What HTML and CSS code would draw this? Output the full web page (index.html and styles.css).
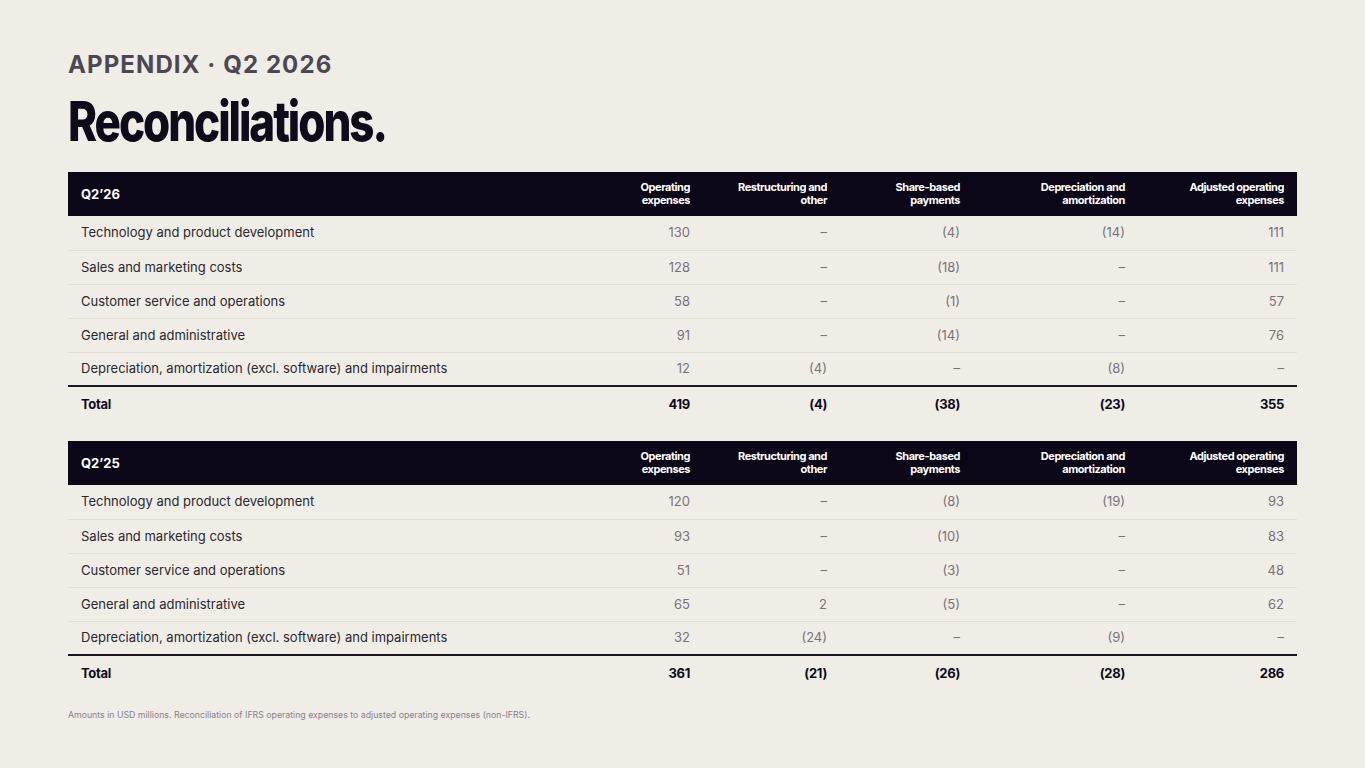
FILE: index.html
```html
<!DOCTYPE html>
<html lang="en">
<head>
<meta charset="utf-8">
<title>Reconciliations</title>
<link rel="stylesheet" href="styles.css">
</head>
<body>
<main class="page">
  <div class="eyebrow">APPENDIX · Q2 2026</div>
  <h1 class="title"><span class="title-text">Reconciliations.</span></h1>

  <table class="recon">
    <colgroup><col class="c-label"><col class="c-op"><col class="c-rs"><col class="c-sb"><col class="c-da"><col class="c-adj"></colgroup>
    <thead>
      <tr><th class="period">Q2’26</th><th>Operating<br>expenses</th><th>Restructuring and<br>other</th><th>Share-based<br>payments</th><th>Depreciation and<br>amortization</th><th>Adjusted operating<br>expenses</th></tr>
    </thead>
    <tbody>
      <tr><td>Technology and product development</td><td>130</td><td>–</td><td>(4)</td><td>(14)</td><td>111</td></tr>
      <tr><td>Sales and marketing costs</td><td>128</td><td>–</td><td>(18)</td><td>–</td><td>111</td></tr>
      <tr><td>Customer service and operations</td><td>58</td><td>–</td><td>(1)</td><td>–</td><td>57</td></tr>
      <tr><td>General and administrative</td><td>91</td><td>–</td><td>(14)</td><td>–</td><td>76</td></tr>
      <tr class="last"><td>Depreciation, amortization (excl. software) and impairments</td><td>12</td><td>(4)</td><td>–</td><td>(8)</td><td>–</td></tr>
    </tbody>
    <tfoot>
      <tr><td>Total</td><td>419</td><td>(4)</td><td>(38)</td><td>(23)</td><td>355</td></tr>
    </tfoot>
  </table>

  <table class="recon">
    <colgroup><col class="c-label"><col class="c-op"><col class="c-rs"><col class="c-sb"><col class="c-da"><col class="c-adj"></colgroup>
    <thead>
      <tr><th class="period">Q2’25</th><th>Operating<br>expenses</th><th>Restructuring and<br>other</th><th>Share-based<br>payments</th><th>Depreciation and<br>amortization</th><th>Adjusted operating<br>expenses</th></tr>
    </thead>
    <tbody>
      <tr><td>Technology and product development</td><td>120</td><td>–</td><td>(8)</td><td>(19)</td><td>93</td></tr>
      <tr><td>Sales and marketing costs</td><td>93</td><td>–</td><td>(10)</td><td>–</td><td>83</td></tr>
      <tr><td>Customer service and operations</td><td>51</td><td>–</td><td>(3)</td><td>–</td><td>48</td></tr>
      <tr><td>General and administrative</td><td>65</td><td>2</td><td>(5)</td><td>–</td><td>62</td></tr>
      <tr class="last"><td>Depreciation, amortization (excl. software) and impairments</td><td>32</td><td>(24)</td><td>–</td><td>(9)</td><td>–</td></tr>
    </tbody>
    <tfoot>
      <tr><td>Total</td><td>361</td><td>(21)</td><td>(26)</td><td>(28)</td><td>286</td></tr>
    </tfoot>
  </table>

  <p class="note">Amounts in USD millions. Reconciliation of IFRS operating expenses to adjusted operating expenses (non-IFRS).</p>
</main>
</body>
</html>
```
FILE: styles.css
```css
html, body {
  margin: 0;
  padding: 0;
  background: #f0ede7;
}
body {
  font-family: Inter, "Noto Sans", "Liberation Sans", sans-serif;
  color: #2a2731;
}
.page {
  width: 1229px;
  padding: 50px 68px 0 68px;
}
.eyebrow {
  font-family: Inter, "Liberation Sans", sans-serif;
  font-weight: 700;
  font-size: 24px;
  line-height: 30px;
  letter-spacing: 1.1px;
  color: #4b4853;
}
.title {
  margin: 13px 0 0 0;
  font-family: Inter, "Liberation Sans", sans-serif;
  font-weight: 800;
  font-size: 55px;
  line-height: 56px;
  letter-spacing: -2.6px;
  color: #0e0b1b;
}
.title-text {
  display: inline-block;
  transform: scaleX(0.8);
  transform-origin: left center;
}
.recon {
  width: 1229px;
  border-collapse: collapse;
  table-layout: fixed;
  margin-top: 23px;
}
.recon + .recon {
  margin-top: 20px;
}
.c-label { width: 525px; }
.c-op { width: 110px; }
.c-rs { width: 137px; }
.c-sb { width: 133px; }
.c-da { width: 165px; }
.c-adj { width: 159px; }

.recon thead tr {
  background: #0b0719;
  height: 44px;
}
.recon th {
  color: #ffffff;
  font-size: 11px;
  line-height: 13px;
  font-weight: 700;
  letter-spacing: -0.45px;
  text-align: right;
  padding: 0 13px;
  vertical-align: middle;
}
.recon th.period {
  text-align: left;
  font-size: 13px;
  letter-spacing: 0;
}
.recon tbody tr {
  height: 34px;
}
.recon tbody td {
  border-bottom: 1px solid #e3dfd8;
  padding: 0 13px 1px 13px;
  font-size: 13px;
  line-height: 16px;
  text-align: right;
  color: #77737c;
  vertical-align: middle;
}
.recon tbody td:first-child {
  text-align: left;
  color: #2a2731;
}
.recon tbody tr.last td {
  border-bottom: 2px solid #1a1722;
}
.recon tfoot tr {
  height: 35px;
}
.recon tfoot td {
  padding: 0 13px;
  font-size: 13px;
  font-weight: 700;
  letter-spacing: -0.3px;
  text-align: right;
  color: #0e0b1b;
  vertical-align: middle;
}
.recon tfoot td:first-child {
  text-align: left;
}
.note {
  margin: 19px 0 0 0;
  font-size: 8.75px;
  line-height: 12px;
  color: #85818a;
}
```
